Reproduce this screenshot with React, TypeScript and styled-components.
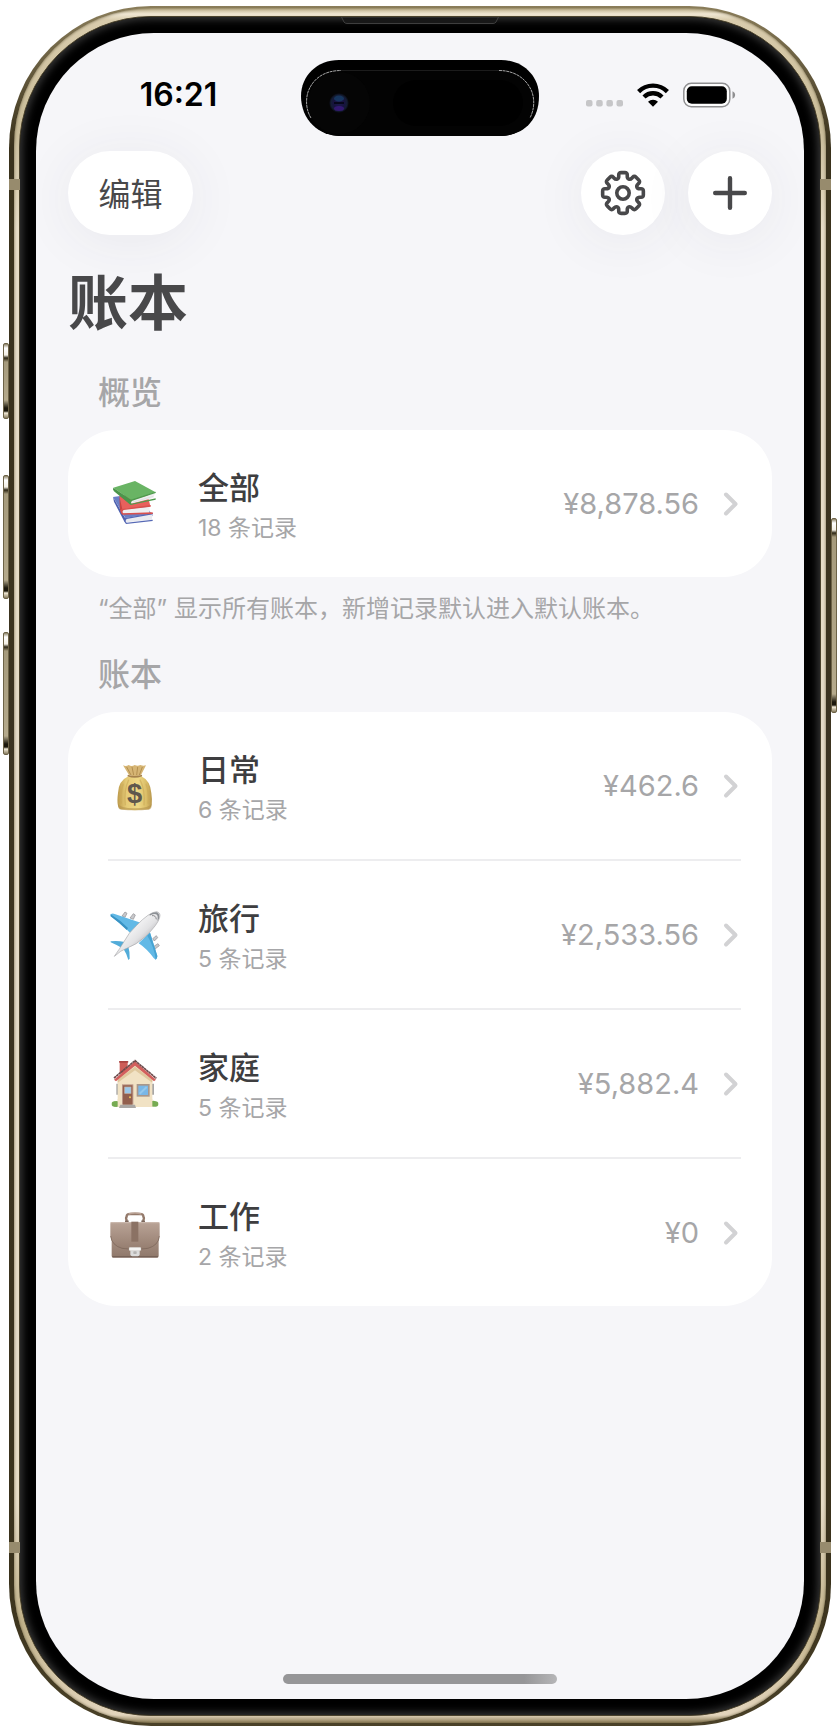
import React from 'react';
import styled, { createGlobalStyle } from 'styled-components';

const GlobalStyle = createGlobalStyle`
  *, *::before, *::after { box-sizing: border-box; }
  body {
    margin: 0;
    background: #ffffff;
    font-family: Inter, "Noto Sans CJK SC", sans-serif;
    color: #3e3e40;
  }
  h1, h2, p, ul { margin: 0; padding: 0; }
  ul { list-style: none; }
`;

/* ---------- device shell ---------- */

const Stage = styled.div`
  display: flex;
  min-height: 100vh;
  padding: 6px 9px;
`;

const Shell = styled.div`
  position: relative;
  display: flex;
  flex: 1;
  padding: 2px 5px 3px;
  border-radius: 142px;
  background: linear-gradient(#8a7d5a, #3a321c 140px, #3d3521 50%, #3a321c calc(100% - 140px), #4a4128);
`;

const Band = styled.div`
  display: flex;
  flex: 1;
  padding: 8px 5px 7px;
  border-radius: 138px;
  background: linear-gradient(#b9ab84, #efe6d2 6px, #d9ccad 12px, #c9bc98 120px, #e6dcc6 220px, #e6dcc6 calc(100% - 220px), #c0b189 calc(100% - 100px), #e3d5bd calc(100% - 8px), #8c7d57);
  box-shadow: inset 0 0 3px #6b6040;
`;

const Bezel = styled.div`
  display: flex;
  flex: 1;
  padding: 16px;
  border: 1px solid #4a422c;
  border-radius: 132px;
  background: #000000;
  box-shadow: inset 0 0 9px 2px #3c3c3c;
`;

const Screen = styled.main`
  display: flex;
  flex: 1;
  flex-direction: column;
  overflow: hidden;
  border-radius: 118px;
  background: #f6f6f9;
`;

const SideKey = styled.span<{ $side: 'left' | 'right'; $top: number; $length: number }>`
  position: absolute;
  ${({ $side }) => $side}: -6px;
  top: ${({ $top }) => $top}px;
  width: 6px;
  height: ${({ $length }) => $length}px;
  border-radius: 2px;
  border: 1px solid #6d6347;
  background: linear-gradient(#8b8165, #ffffff 4px, #f3efe4 11px, #2c2614 14px, #a59a7c 18px, #b5aa8c calc(100% - 18px), #1c180c calc(100% - 10px), #1c180c calc(100% - 7px), #f4ecd8 calc(100% - 5px), #857a5d);
`;

const Antenna = styled.span<{ $side: 'left' | 'right'; $edge: 'top' | 'bottom' }>`
  position: absolute;
  ${({ $side }) => $side}: 0;
  ${({ $edge }) => $edge}: 173px;
  width: 11px;
  height: 11px;
  background: #978b6d;
`;

const Earpiece = styled.svg`
  position: absolute;
  top: 11px;
  left: 50%;
  width: 158px;
  height: 7px;
  margin-left: -79px;
`;

/* ---------- status bar ---------- */

const StatusBar = styled.div`
  display: grid;
  grid-template-columns: 1fr 238px 1fr;
  align-items: center;
  padding: 27px 0 15px;
`;

const Clock = styled.time`
  padding: 0 0 6px 20px;
  text-align: center;
  font-size: 32px;
  line-height: 36px;
  font-weight: 600;
  color: #000000;
`;

const StatusIcons = styled.div`
  display: flex;
  align-items: center;
  gap: 14px;
  padding: 0 0 6px 47px;
`;

/* ---------- navigation ---------- */

const NavBar = styled.nav`
  display: flex;
  align-items: center;
  justify-content: space-between;
  padding: 0 32px;
`;

const NavGroup = styled.div`
  display: flex;
  gap: 23px;
`;

const PillButton = styled.button<{ $round?: boolean }>`
  display: flex;
  align-items: center;
  justify-content: center;
  width: ${({ $round }) => ($round ? '84px' : '125px')};
  height: 84px;
  padding: ${({ $round }) => ($round ? '0' : '4px 0 0')};
  border: 0;
  border-radius: 42px;
  background: #ffffff;
  box-shadow: 0 6px 56px rgba(50, 50, 90, 0.07);
  font: inherit;
  font-size: 32px;
  line-height: 40px;
  color: #48484a;
`;

/* ---------- content ---------- */

const Content = styled.div`
  padding: 30px 32px 0;
`;

const PageTitle = styled.h1`
  font-size: 60px;
  line-height: 76px;
  font-weight: 700;
  color: #48484a;
`;

const Section = styled.section`
  padding-top: 32px;
`;

const SectionTitle = styled.h2`
  padding: 0 30px;
  font-size: 32px;
  line-height: 40px;
  font-weight: 500;
  color: #a6a6a8;
`;

const Card = styled.ul`
  margin-top: 17px;
  padding: 0 31px 0 40px;
  border-radius: 48px;
  background: #ffffff;
`;

const Item = styled.li`
  & + & {
    border-top: 2px solid #ededef;
  }
`;

const RowLink = styled.a`
  display: flex;
  align-items: center;
  min-height: 147px;
  color: inherit;
  text-decoration: none;
`;

const Emoji = styled.svg`
  flex: none;
  width: 54px;
  height: 54px;
`;

const Labels = styled.span`
  display: flex;
  flex: 1;
  flex-direction: column;
  gap: 8px;
  padding: 4px 0 0 36px;
`;

const Name = styled.span`
  font-size: 31px;
  line-height: 36px;
  font-weight: 500;
`;

const Count = styled.span`
  font-size: 23px;
  line-height: 28px;
  color: #a6a6a8;
`;

const Amount = styled.span`
  padding-right: 24px;
  font-size: 29px;
  line-height: 36px;
  color: #a6a6a8;
`;

const Chevron = styled.svg`
  flex: none;
  width: 18px;
  height: 26px;
`;

const Footnote = styled.p`
  padding: 18px 30px 0;
  font-size: 24px;
  line-height: 28px;
  color: #a6a6a8;
`;

const HomeIndicator = styled.div`
  width: 274px;
  height: 10px;
  margin: auto auto 15px;
  border-radius: 5px;
  background: linear-gradient(90deg, #969698, #969698 88%, #b6b6b8);
`;

/* ---------- drawings ---------- */

function polar(radius: number, degrees: number): [number, number] {
  const a = (degrees * Math.PI) / 180;
  return [24 + radius * Math.sin(a), 24 - radius * Math.cos(a)];
}

function gearPath(): string {
  const points: [number, number][] = [];
  for (let tooth = 0; tooth < 8; tooth += 1) {
    const c = tooth * 45;
    points.push(polar(15.2, c - 16), polar(20.8, c - 12), polar(20.8, c + 12), polar(15.2, c + 16));
  }
  const toward = (a: number[], b: number[], distance: number) => {
    const length = Math.hypot(b[0] - a[0], b[1] - a[1]);
    const t = Math.min(distance / length, 0.5);
    return `${(a[0] + (b[0] - a[0]) * t).toFixed(2)} ${(a[1] + (b[1] - a[1]) * t).toFixed(2)}`;
  };
  return (
    points
      .map((p, i) => {
        const previous = points[(i + points.length - 1) % points.length];
        const next = points[(i + 1) % points.length];
        return `${i ? 'L' : 'M'}${toward(p, previous, 2.4)}Q${p[0].toFixed(2)} ${p[1].toFixed(2)} ${toward(p, next, 2.4)}`;
      })
      .join('') + 'Z'
  );
}

const GearIcon = () => (
  <svg width="48" height="48" viewBox="0 0 48 48" fill="none" stroke="#48484a" strokeWidth="3.6" strokeLinejoin="round" aria-hidden="true">
    <path d={gearPath()} />
    <circle cx="24" cy="24" r="6.2" />
  </svg>
);

const PlusIcon = () => (
  <svg width="36" height="36" viewBox="0 0 36 36" stroke="#48484a" strokeWidth="4.4" strokeLinecap="round" aria-hidden="true">
    <path d="M18 3.2V32.8M3.2 18H32.8" />
  </svg>
);

const Island = () => (
  <svg width="238" height="76" viewBox="0 0 238 76" aria-hidden="true">
    <defs>
      <radialGradient id="lens">
        <stop offset="0" stopColor="#1d1a4a" />
        <stop offset="0.55" stopColor="#17133f" />
        <stop offset="0.8" stopColor="#141c33" />
        <stop offset="1" stopColor="#050507" />
      </radialGradient>
    </defs>
    <path d="M38 0H200C222 0 238 16 238 36C238 62 221 76 198 76H39C18 76 0 60 0 36C0 16 16 0 38 0Z" fill="#000" />
    <rect x="5.5" y="10.5" width="228" height="65.5" rx="33" fill="#030303" />
    <path d="M10 58C5 50 4.500 40 7 32C12 18 24 10.500 40 10.500" fill="none" stroke="#b8b8b8" strokeWidth="0.9" strokeDasharray="3 0.6" />
    <path d="M40 10.500H198" fill="none" stroke="#1c1c1c" strokeWidth="1" />
    <path d="M198 10.500C214 10.500 226 19 231 32C234 41 233 50 229 58" fill="none" stroke="#b8b8b8" strokeWidth="0.9" strokeDasharray="3 0.6" />
    <circle cx="38" cy="43" r="31" fill="#050505" />
    <rect x="92" y="20" width="130" height="46" rx="23" fill="#000" />
    <circle cx="38" cy="43" r="10" fill="url(#lens)" />
    <ellipse cx="38" cy="38.500" rx="5" ry="3" fill="#17436b" opacity="0.7" />
    <ellipse cx="38" cy="48.500" rx="5" ry="2.500" fill="#3f1a86" opacity="0.7" />
    <rect x="33" y="42" width="10" height="2" fill="#07071a" />
  </svg>
);

const SignalDots = () => (
  <svg width="37" height="24" viewBox="0 0 37 24" fill="#c6c6c8" aria-hidden="true">
    <rect x="0" y="17" width="6.500" height="6.500" rx="2" />
    <rect x="10.200" y="17" width="6.500" height="6.500" rx="2" />
    <rect x="20.400" y="17" width="6.500" height="6.500" rx="2" />
    <rect x="30.500" y="17" width="6.500" height="6.500" rx="2" />
  </svg>
);

const WifiIcon = () => (
  <svg width="32" height="24" viewBox="0 0 32 24" fill="none" stroke="#000" strokeWidth="4.4" aria-hidden="true">
    <path d="M1.600 8.600A20.400 20.400 0 0 1 30.400 8.600" />
    <path d="M7 14A12.800 12.800 0 0 1 25 14" />
    <path d="M16 23.800L11 18.700A7.200 7.200 0 0 1 21 18.700Z" fill="#000" stroke="none" />
  </svg>
);

const BatteryIcon = () => (
  <svg width="53" height="26" viewBox="0 0 53 26" aria-hidden="true">
    <rect x="0.800" y="1.300" width="46" height="23.400" rx="7.600" fill="#fdfdfd" stroke="#8f8f91" strokeWidth="1.500" />
    <rect x="3.800" y="4.300" width="40" height="17.400" rx="5" fill="#000" />
    <path d="M49.500 9.300C53 10.600 53 15.400 49.500 16.700Z" fill="#8f8f91" />
  </svg>
);

const Books = () => (
  <Emoji viewBox="54 54 162 162" aria-hidden="true">
    <path d="M69 114L140 104L189 170L109 182Z" fill="#6a7fc6" />
    <path d="M69 114L72 128L104 190L107 180Z" fill="#4c5fae" />
    <path d="M106 177L188 164L185 182L109 190Z" fill="#e9eaf0" />
    <path d="M105 177L189 162L189 166L110 180Q104 186 110 191L188 182V186L108 195Q100 187 105 177Z" fill="#5568b5" />
    <path d="M88 112L172 104L181 142L96 153Z" fill="#e8605c" />
    <path d="M88 112L97 151Q93 158 97 166L90 152Z" fill="#c94340" />
    <path d="M97 151L179 143L178 162L97 164Z" fill="#eeeef0" />
    <path d="M95 150L182 138V143L101 153Q94 158 100 163L188 160V165L97 167Q87 158 95 150Z" fill="#d9504d" />
    <path d="M70 86L135 66L197 100L124 124Z" fill="#69b464" />
    <path d="M70 86L124 123Q117 130 121 137L72 97Q67 91 70 86Z" fill="#4b954a" />
    <path d="M124 124L195 103L190 117L123 134Z" fill="#efeff0" />
    <path d="M129 129L190 112" stroke="#d0d3d4" strokeWidth="1.500" />
    <path d="M122 122L197 98V102L127 125Q120 130 125 134L197 118V122L122 138Q113 130 122 122Z" fill="#4d9a4c" />
  </Emoji>
);

const MoneyBag = () => (
  <Emoji viewBox="54 56 162 162" aria-hidden="true">
    <defs>
      <linearGradient id="bag">
        <stop offset="0" stopColor="#bd9a4b" />
        <stop offset="0.25" stopColor="#e5ca76" />
        <stop offset="0.6" stopColor="#efd885" />
        <stop offset="0.85" stopColor="#d9bc66" />
        <stop offset="1" stopColor="#b6954c" />
      </linearGradient>
    </defs>
    <path d="M99 75Q108 79 116 74Q125 80 134 74Q143 79 151 74Q160 78 168 75L153 104Q134 112 117 104Z" fill="#d6b574" />
    <path d="M110 80L123 104M126 80L131 104M143 80L140 104M157 80L148 104" stroke="#b38f50" strokeWidth="3" />
    <path d="M115 108Q85 122 84 158Q78 205 94 207Q134 212 177 207Q190 200 184 158Q181 121 154 108Q134 114 115 108Z" fill="url(#bag)" />
    <path d="M100 130Q90 160 94 190M116 118Q101 150 106 195M168 130Q178 160 174 190M150 118Q166 150 162 195" stroke="#c9a856" strokeWidth="4" fill="none" opacity="0.6" />
    <path d="M84 190Q88 202 134 204Q180 202 185 190Q187 207 175 208Q134 212 94 208Q82 206 84 190Z" fill="#b4934d" opacity="0.6" />
    <path d="M115 106Q134 113 154 106" stroke="#a5814b" strokeWidth="5" fill="none" strokeLinecap="round" />
    <text x="134" y="189" textAnchor="middle" fontFamily="Liberation Sans, sans-serif" fontSize="82" fontWeight="700" fill="#5f584d">$</text>
  </Emoji>
);

const Plane = () => (
  <Emoji viewBox="54 502 162 162" aria-hidden="true">
    <defs>
      <linearGradient id="fuselage" x1="0" y1="0" x2="1" y2="1">
        <stop offset="0.25" stopColor="#ffffff" />
        <stop offset="0.55" stopColor="#e2e2e4" />
        <stop offset="0.8" stopColor="#9b9b9f" />
      </linearGradient>
    </defs>
    <g fill="#c9c9cc" stroke="#8d8d91" strokeWidth="2">
      <path d="M96 526L105 514L111 518L105 530Z" />
      <path d="M120 532L130 519L136 523L130 536Z" />
      <path d="M188 594L199 585L203 591L193 601Z" />
      <path d="M190 618L204 609L208 615L194 626Z" />
    </g>
    <path d="M62 521Q68 516 74 520L152 546L120 576Q88 546 62 527Z" fill="#62b9e6" />
    <path d="M62 521L62 527Q88 546 110 568L114 562Q90 538 62 521Z" fill="#3993c4" />
    <path d="M146 608L180 575L202 646Q202 654 197 657L191 652Q170 624 146 608Z" fill="#62b9e6" />
    <path d="M180 577L202 646Q202 654 197 657Q193 620 172 585Z" fill="#47a3d2" />
    <path d="M62 602Q82 599 104 604L92 620Q76 611 62 605Z" fill="#52acd9" />
    <path d="M101 626L114 614Q120 634 119 654L115 658Q111 641 101 626Z" fill="#52acd9" />
    <path d="M73 647Q90 623 100 606Q116 576 139 555Q178 514 200 513Q213 516 209 530Q205 550 166 588Q138 613 112 622Q92 629 73 647Z" fill="url(#fuselage)" stroke="#a7a7ab" strokeWidth="2" />
    <path d="M179 521Q190 513 201 515Q210 519 207 534L202 541Q206 524 198 521Q190 518 179 525Z" fill="#8c9095" />
    <path d="M186 525Q197 523 199 536" stroke="#77777b" strokeWidth="2.500" fill="none" />
  </Emoji>
);

const House = () => (
  <Emoji viewBox="54 110 162 162" aria-hidden="true">
    <rect x="89" y="123" width="24" height="36" fill="#cd5d58" />
    <rect x="87" y="122" width="28" height="5" rx="2" fill="#aa4543" />
    <path d="M79 190H85V223H79ZM186 190H192V223H186Z" fill="#a7a6a5" />
    <path d="M83 172L135 133L187 172V260H83Z" fill="#f1e2c4" />
    <path d="M83 178L135 139L187 178V187L135 150L83 187Z" fill="#dfc79d" />
    <path d="M72 178L135 123L198 178L192 183L135 136L78 183Z" fill="#d35f5d" />
    <path d="M72 173L135 121L199 174" fill="none" stroke="#6c4a4b" strokeWidth="5" strokeDasharray="8 1" />
    <g fill="#76ab52">
      <circle cx="73" cy="251" r="8" /><circle cx="79" cy="251" r="9" />
      <circle cx="190" cy="250" r="9" /><circle cx="197" cy="251" r="8" />
    </g>
    <path d="M83 236H92V260H83ZM178 236H187V260H178Z" fill="#f1e2c4" />
    <rect x="96" y="192" width="34" height="61" fill="#b99587" />
    <rect x="99" y="195" width="28" height="58" fill="#925f4d" />
    <rect x="104" y="200" width="19" height="19" fill="#9bc8e9" stroke="#c3b4ac" strokeWidth="2" />
    <circle cx="120" cy="231" r="3" fill="#f0c65a" />
    <path d="M91 253H135L138 263H87Z" fill="#aaa7a4" />
    <rect x="140" y="191" width="39" height="38" fill="#a8978b" />
    <rect x="145" y="196" width="29" height="28" fill="#79b7e7" />
    <path d="M149 220L170 200" stroke="#94c8ec" strokeWidth="6" />
  </Emoji>
);

const Briefcase = () => (
  <Emoji viewBox="54 556 162 162" aria-hidden="true">
    <defs>
      <linearGradient id="leather" x1="0" y1="0" x2="0" y2="1">
        <stop offset="0" stopColor="#b8a193" />
        <stop offset="1" stopColor="#8f786b" />
      </linearGradient>
      <linearGradient id="flap" x1="0" y1="0" x2="0" y2="1">
        <stop offset="0" stopColor="#b9a396" />
        <stop offset="1" stopColor="#957d6f" />
      </linearGradient>
    </defs>
    <path d="M111 601Q106 592 110 588Q109 580 120 580H150Q161 580 160 588Q164 592 159 601" fill="none" stroke="#93796a" strokeWidth="7" />
    <path d="M116 580Q135 574 154 580" stroke="#bba396" strokeWidth="5" fill="none" />
    <path d="M105 602H116M154 602H165" stroke="#7c685d" strokeWidth="5" />
    <rect x="65" y="610" width="141" height="101" rx="5" fill="url(#leather)" />
    <path d="M67 708H204" stroke="#766257" strokeWidth="4" />
    <path d="M64 604H205Q209 604 209 609V646Q207 674 174 683Q135 690 96 683Q64 674 61 646V609Q61 604 64 604Z" fill="url(#flap)" />
    <path d="M62 646Q65 674 96 683Q135 691 174 683Q206 674 208 646" fill="none" stroke="#776256" strokeWidth="2" />
    <path d="M62 606H208" stroke="#cebcb1" strokeWidth="3" />
    <rect x="124" y="603" width="21" height="60" fill="#8b7264" />
    <path d="M121 683H149V701Q149 707 143 707H127Q121 707 121 701Z" fill="#dcdcdc" />
    <rect x="117" y="680" width="36" height="10" rx="3" fill="#f5f5f4" stroke="#b7b0aa" strokeWidth="1" />
    <rect x="130" y="692" width="10" height="8" rx="2" fill="#b5b3b1" />
  </Emoji>
);

/* ---------- data ---------- */

interface Ledger {
  id: string;
  name: string;
  count: number;
  amount: string;
  Icon: () => React.ReactElement;
}

const overview: Ledger = { id: 'all', name: '全部', count: 18, amount: '¥8,878.56', Icon: Books };

const ledgers: Ledger[] = [
  { id: 'daily', name: '日常', count: 6, amount: '¥462.6', Icon: MoneyBag },
  { id: 'travel', name: '旅行', count: 5, amount: '¥2,533.56', Icon: Plane },
  { id: 'family', name: '家庭', count: 5, amount: '¥5,882.4', Icon: House },
  { id: 'work', name: '工作', count: 2, amount: '¥0', Icon: Briefcase },
];

const LedgerRow = ({ ledger }: { ledger: Ledger }) => (
  <Item>
    <RowLink href={`#${ledger.id}`}>
      <ledger.Icon />
      <Labels>
        <Name>{ledger.name}</Name>
        <Count>{ledger.count} 条记录</Count>
      </Labels>
      <Amount>{ledger.amount}</Amount>
      <Chevron viewBox="0 0 18 26" fill="none" stroke="#d2d2d4" strokeWidth="4" strokeLinecap="round" strokeLinejoin="round" aria-hidden="true">
        <path d="M3 3.500L12.500 13L3 22.500" />
      </Chevron>
    </RowLink>
  </Item>
);

export default function App() {
  return (
    <>
      <GlobalStyle />
      <Stage>
        <Shell>
          <SideKey $side="left" $top={337} $length={76} />
          <SideKey $side="left" $top={469} $length={124} />
          <SideKey $side="left" $top={626} $length={123} />
          <SideKey $side="right" $top={512} $length={195} />
          <Band>
            <Bezel>
              <Screen>
                <StatusBar>
                  <Clock>16:21</Clock>
                  <Island />
                  <StatusIcons>
                    <SignalDots />
                    <WifiIcon />
                    <BatteryIcon />
                  </StatusIcons>
                </StatusBar>
                <NavBar>
                  <PillButton type="button">编辑</PillButton>
                  <NavGroup>
                    <PillButton type="button" $round aria-label="设置">
                      <GearIcon />
                    </PillButton>
                    <PillButton type="button" $round aria-label="新增账本">
                      <PlusIcon />
                    </PillButton>
                  </NavGroup>
                </NavBar>
                <Content>
                  <PageTitle>账本</PageTitle>
                  <Section>
                    <SectionTitle>概览</SectionTitle>
                    <Card>
                      <LedgerRow ledger={overview} />
                    </Card>
                    <Footnote>“全部” 显示所有账本，新增记录默认进入默认账本。</Footnote>
                  </Section>
                  <Section>
                    <SectionTitle>账本</SectionTitle>
                    <Card>
                      {ledgers.map((ledger) => (
                        <LedgerRow key={ledger.id} ledger={ledger} />
                      ))}
                    </Card>
                  </Section>
                </Content>
                <HomeIndicator />
              </Screen>
            </Bezel>
          </Band>
          <Antenna $side="left" $edge="top" />
          <Antenna $side="right" $edge="top" />
          <Antenna $side="left" $edge="bottom" />
          <Antenna $side="right" $edge="bottom" />
          <Earpiece viewBox="0 0 158 7" aria-hidden="true">
            <path d="M0.500 0L3 5Q4 6.500 6 6.500H152Q154 6.500 155 5L157.500 0Z" fill="#181818" stroke="#4a4a4a" strokeWidth="0.800" />
          </Earpiece>
        </Shell>
      </Stage>
    </>
  );
}
